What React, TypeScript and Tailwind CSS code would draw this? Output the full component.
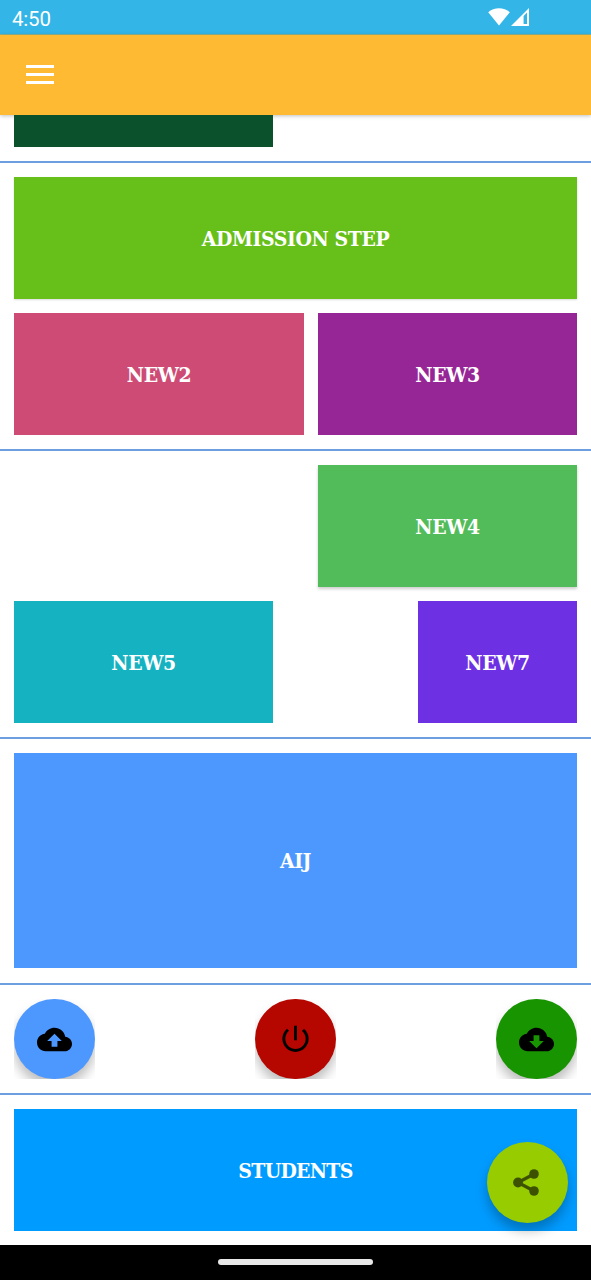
import React from "react";

function Tile({ label, className }: { label?: string; className: string }) {
  return (
    <button
      className={`flex items-center justify-center pt-[1px] font-['DejaVu_Serif_Condensed','DejaVu_Serif',serif] text-[21px] font-bold font-stretch-condensed text-white ${className}`}
    >
      {label}
    </button>
  );
}

function Rule({ className }: { className: string }) {
  return <div className={`h-[2px] w-full shrink-0 bg-[#6b9fe0] ${className}`} />;
}

function RoundButton({ className, path, label }: { className: string; path: string; label: string }) {
  return (
    <div className="h-20 w-[81px] overflow-hidden">
      <button
        aria-label={label}
        className={`flex h-20 w-[81px] items-center justify-center rounded-full shadow-[0_8px_12px_0px_rgba(0,0,0,0.26)] ${className}`}
      >
        <svg viewBox="0 0 24 24" className="h-[35px] w-[35px]" fill="#000">
          <path d={path} />
        </svg>
      </button>
    </div>
  );
}

export default function App() {
  return (
    <div className="relative flex h-[1280px] w-[591px] flex-col overflow-hidden bg-white">
      <div className="flex h-[35px] shrink-0 items-center justify-between border-b border-[#8cb38c] bg-[#33b5e7] pr-[62px] pl-[12px] text-white">
        <span className="pt-[4px] font-[Roboto,sans-serif] text-[20.5px] leading-none tracking-[-0.2px]">4:50</span>
        <span className="flex items-center gap-[1px]">
          <svg width="22" height="18" viewBox="0 0 22 18" fill="#fff">
            <path d="M0.2 4.2C6-1.1 16-1.1 21.8 4.2L11 17.6Z" />
          </svg>
          <svg width="18" height="18" viewBox="0 0 18 18">
            <path d="M0 18 18 0V18Z" fill="#fff" />
            <path d="M12.6 8 16 4.6V16H12.6Z" fill="#33b5e7" />
          </svg>
        </span>
      </div>
      <header className="z-10 flex h-20 shrink-0 items-center bg-[#ffba33] pb-[1px] pl-[26px] shadow-[0_1px_4px_rgba(0,0,0,0.25)]">
        <button aria-label="Menu" className="flex flex-col gap-[5px]">
          <span className="h-[3px] w-[28px] bg-white" />
          <span className="h-[3px] w-[28px] bg-white" />
          <span className="h-[3px] w-[28px] bg-white" />
        </button>
      </header>
      <main className="flex grow flex-col">
        <div className="z-10 ml-[14px] h-8 w-[259px] shrink-0 bg-[#0b522c]" />
        <Rule className="mt-[14px]" />
        <section className="mt-[14px] flex flex-col gap-[14px] px-[14px]">
          <Tile label="ADMISSION STEP" className="h-[122px] bg-[#67bf1a] tracking-[-0.4px] shadow-[0_1px_2px_rgba(0,0,0,0.15)]" />
          <div className="flex justify-between">
            <Tile label="NEW2" className="h-[122px] w-[290px] bg-[#cd4b74] tracking-[-0.4px]" />
            <Tile label="NEW3" className="h-[122px] w-[259px] bg-[#962596] tracking-[-0.4px]" />
          </div>
        </section>
        <Rule className="mt-[14px]" />
        <section className="mt-[14px] flex flex-col gap-[14px] px-[14px]">
          <div className="flex justify-end">
            <Tile label="NEW4" className="h-[122px] w-[259px] bg-[#53bc5a] tracking-[-0.4px] shadow-[0_2px_3px_rgba(0,0,0,0.2)]" />
          </div>
          <div className="flex justify-between">
            <Tile label="NEW5" className="h-[122px] w-[259px] bg-[#15b2c1] tracking-[-0.4px]" />
            <Tile label="NEW7" className="h-[122px] w-[159px] bg-[#6d30e3] tracking-[-0.4px]" />
          </div>
        </section>
        <Rule className="mt-[14px]" />
        <section className="mt-[14px] flex flex-col px-[14px]">
          <Tile label="AIJ" className="h-[215px] bg-[#4d98ff] tracking-[-0.4px]" />
        </section>
        <Rule className="mt-[15px]" />
        <section className="mt-[14px] flex justify-between px-[14px]">
          <RoundButton
            label="Upload"
            className="bg-[#4d98ff]"
            path="M19.35 10.04C18.67 6.59 15.64 4 12 4 9.11 4 6.6 5.64 5.35 8.04 2.34 8.36 0 10.91 0 14c0 3.31 2.69 6 6 6h13c2.76 0 5-2.24 5-5 0-2.64-2.05-4.78-4.65-4.96zM14 13v4h-4v-4H7l5-5 5 5h-3z"
          />
          <RoundButton
            label="Power"
            className="bg-[#b50600]"
            path="M13 2.5h-2v10h2v-10zm4.83 2.17-1.42 1.42C17.99 7.36 19 9.31 19 11.5c0 3.87-3.13 7-7 7s-7-3.13-7-7c0-2.19 1.01-4.14 2.58-5.42L6.17 4.67C4.23 6.32 3 8.76 3 11.5c0 4.97 4.03 9 9 9s9-4.03 9-9c0-2.74-1.23-5.18-3.17-6.83z"
          />
          <RoundButton
            label="Download"
            className="bg-[#189400]"
            path="M19.35 10.04C18.67 6.59 15.64 4 12 4 9.11 4 6.6 5.64 5.35 8.04 2.34 8.36 0 10.91 0 14c0 3.31 2.69 6 6 6h13c2.76 0 5-2.24 5-5 0-2.64-2.05-4.78-4.65-4.96zM17 13l-5 5-5-5h3V9h4v4h3z"
          />
        </section>
        <Rule className="mt-[14px]" />
        <section className="mt-[14px] flex flex-col px-[14px]">
          <Tile label="STUDENTS" className="h-[122px] bg-[#009bff] tracking-[-0.7px]" />
        </section>
      </main>
      <button
        aria-label="Share"
        className="absolute top-[1142px] left-[487px] flex h-[81px] w-[81px] items-center justify-center rounded-full bg-[#97cc00] shadow-[0_8px_12px_0px_rgba(0,0,0,0.26)]"
      >
        <svg viewBox="0 0 26 27" className="mr-[3px] h-[27px] w-[26px]">
          <path d="M21 5 5 13.5 21 22" fill="none" stroke="#3d5200" strokeWidth="3.2" />
          <g fill="#3d5200">
            <circle cx="21" cy="5" r="4.8" />
            <circle cx="5" cy="13.5" r="4.9" />
            <circle cx="21" cy="22" r="4.8" />
          </g>
        </svg>
      </button>
      <footer className="z-10 flex h-[35px] shrink-0 justify-center bg-black pt-[14px]">
        <div className="h-[6px] w-[155px] rounded-full bg-[#e8e8e8]" />
      </footer>
    </div>
  );
}
